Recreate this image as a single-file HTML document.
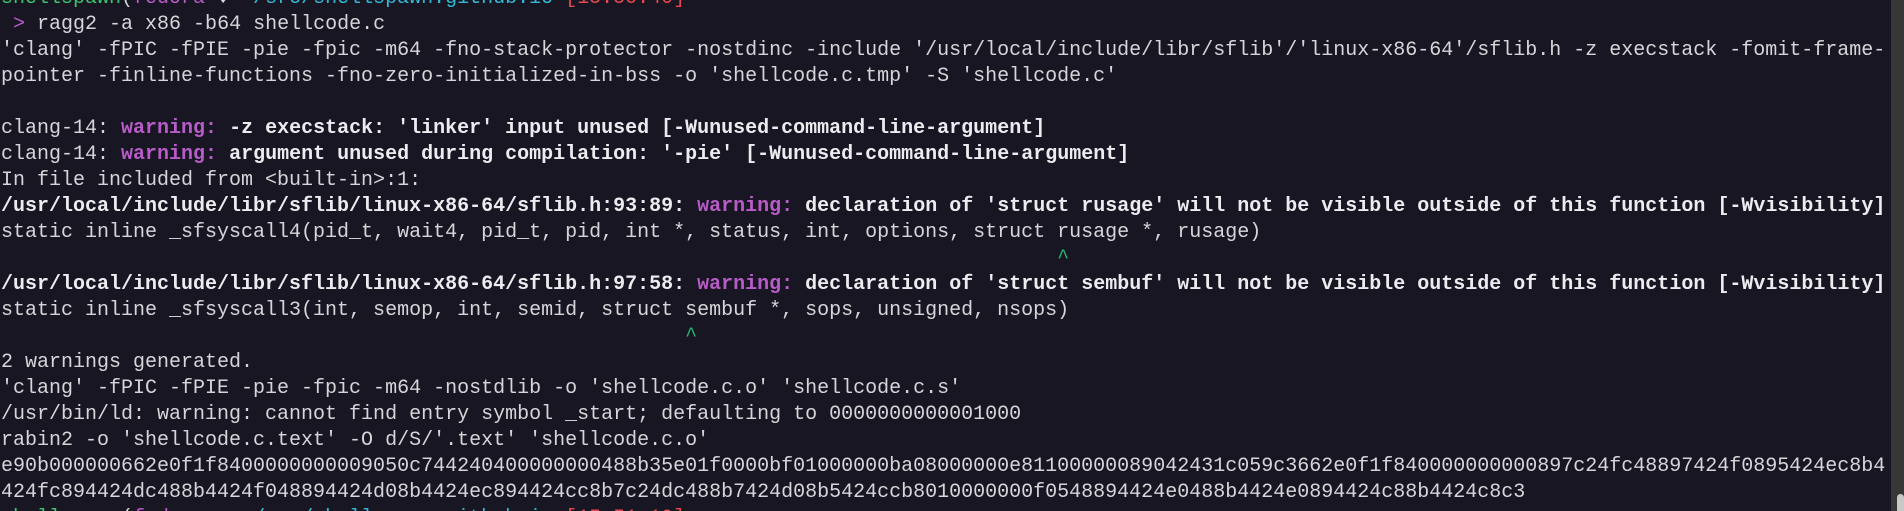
<!DOCTYPE html>
<html><head><meta charset="utf-8"><style>
html,body{margin:0;padding:0;background:#171622;width:1904px;height:511px;overflow:hidden;position:relative}
.t{position:absolute;left:1px;width:1890px;height:26px;line-height:26px;font-family:"Liberation Mono",monospace;font-size:20px;color:#d6d6da;white-space:pre;overflow:hidden}
b{font-weight:bold;color:#ececf0}
.w{color:#b95cc9;font-weight:bold}
.g{color:#2bb673}.p{color:#b95cc9}.c{color:#36b8d4}.r{color:#e5484d}.gr{color:#3ec46d}
#sb{position:absolute;left:1891px;top:0;width:13px;height:511px;background:#373737}
#th{position:absolute;left:1897px;top:494px;width:7px;height:30px;background:#c8c8c8;border-radius:4px}
</style></head><body>
<div class="t" style="top:-14.5px"><span class="gr">shellspawn</span>(<span class="p">fedora</span> ♦ <span class="c">~/src/shellspawn.github.io</span> <span class="r">[15:50:40]</span></div>
<div class="t" style="top:11.5px"> <span class="p">&gt;</span> ragg2 -a x86 -b64 shellcode.c</div>
<div class="t" style="top:37.5px">'clang' -fPIC -fPIE -pie -fpic -m64 -fno-stack-protector -nostdinc -include '/usr/local/include/libr/sflib'/'linux-x86-64'/sflib.h -z execstack -fomit-frame-</div>
<div class="t" style="top:63.5px">pointer -finline-functions -fno-zero-initialized-in-bss -o 'shellcode.c.tmp' -S 'shellcode.c'</div>
<div class="t" style="top:115.5px">clang-14: <span class="w">warning:</span> <b>-z execstack: 'linker' input unused [-Wunused-command-line-argument]</b></div>
<div class="t" style="top:141.5px">clang-14: <span class="w">warning:</span> <b>argument unused during compilation: '-pie' [-Wunused-command-line-argument]</b></div>
<div class="t" style="top:167.5px">In file included from &lt;built-in&gt;:1:</div>
<div class="t" style="top:193.5px"><b>/usr/local/include/libr/sflib/linux-x86-64/sflib.h:93:89:</b> <span class="w">warning:</span> <b>declaration of 'struct rusage' will not be visible outside of this function [-Wvisibility]</b></div>
<div class="t" style="top:219.5px">static inline _sfsyscall4(pid_t, wait4, pid_t, pid, int *, status, int, options, struct rusage *, rusage)</div>
<div class="t" style="top:245.5px"><span class="g">                                                                                        ^</span></div>
<div class="t" style="top:271.5px"><b>/usr/local/include/libr/sflib/linux-x86-64/sflib.h:97:58:</b> <span class="w">warning:</span> <b>declaration of 'struct sembuf' will not be visible outside of this function [-Wvisibility]</b></div>
<div class="t" style="top:297.5px">static inline _sfsyscall3(int, semop, int, semid, struct sembuf *, sops, unsigned, nsops)</div>
<div class="t" style="top:323.5px"><span class="g">                                                         ^</span></div>
<div class="t" style="top:349.5px">2 warnings generated.</div>
<div class="t" style="top:375.5px">'clang' -fPIC -fPIE -pie -fpic -m64 -nostdlib -o 'shellcode.c.o' 'shellcode.c.s'</div>
<div class="t" style="top:401.5px">/usr/bin/ld: warning: cannot find entry symbol _start; defaulting to 0000000000001000</div>
<div class="t" style="top:427.5px">rabin2 -o 'shellcode.c.text' -O d/S/'.text' 'shellcode.c.o'</div>
<div class="t" style="top:453.5px">e90b000000662e0f1f8400000000009050c744240400000000488b35e01f0000bf01000000ba08000000e81100000089042431c059c3662e0f1f840000000000897c24fc48897424f0895424ec8b4</div>
<div class="t" style="top:479.5px">424fc894424dc488b4424f048894424d08b4424ec894424cc8b7c24dc488b7424d08b5424ccb8010000000f0548894424e0488b4424e0894424c88b4424c8c3</div>
<div class="t" style="top:505.5px"><span class="gr">shellspawn</span>(<span class="p">fedora</span> ♦ <span class="c">~/src/shellspawn.github.io</span> <span class="r">[15:51:10]</span></div>
<div id="sb"></div><div id="th"></div>
</body></html>
